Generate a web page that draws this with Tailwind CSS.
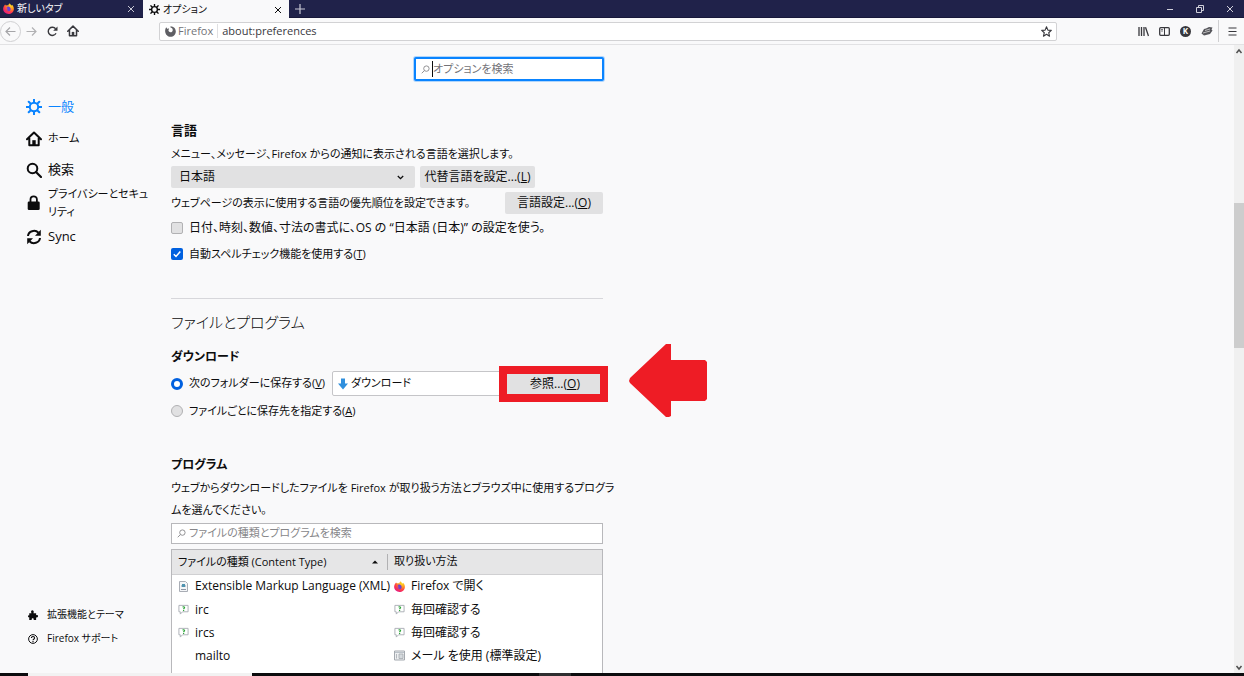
<!DOCTYPE html>
<html lang="ja">
<head>
<meta charset="utf-8">
<title>オプション</title>
<script src="https://cdn.jsdelivr.net/npm/@tailwindcss/browser@4"></script>
</head>
<body class="h-screen flex flex-col overflow-hidden bg-[#f9f9fa] text-[#0c0c0d] text-xs font-['Open_Sans','Noto_Sans_CJK_JP',sans-serif] [font-feature-settings:'palt'] whitespace-nowrap">
<svg class="absolute size-0" aria-hidden="true">
  <defs>
    <radialGradient id="flame" cx="75%" cy="15%" r="95%"><stop offset="0" stop-color="#ffe226"/><stop offset=".4" stop-color="#ff9a1f"/><stop offset=".7" stop-color="#ff3f46"/><stop offset="1" stop-color="#e0158c"/></radialGradient>
  </defs>
  <symbol id="firefox" viewBox="0 0 16 16">
    <path d="M2.200 3.200 3 2l1.400 1.600C5.500 3.200 6.800 3.200 7.600 3.500 7.800 2.200 8.800.900 10 .200c.300 1.600 1.600 2.300 2.500 3.400.500-.200.700-.700.700-1.200C15 4.200 16 6.500 15.800 9c-.300 4-3.600 7-7.800 7S.300 12.800.200 8.800C.200 6.700.900 4.800 2.200 3.200z" fill="url(#flame)"/>
    <path d="M5 6.500C6 5 8.400 4.800 9.900 6c1.700 1.400 1.700 4 .2 5.300-1.600 1.300-4.200 1-5.300-.6 1.200.4 2.500.1 3.200-.7-.8-.3-2-.3-2.700-.9C4.700 8.500 5.600 8 6.700 7.900 6.600 7.200 5.900 6.700 5 6.500z" fill="#6b3fd6"/>
  </symbol>
  <symbol id="gear" viewBox="0 0 16 16">
    <circle cx="8" cy="8" r="4.200" fill="none" stroke="currentColor" stroke-width="2"/>
    <path d="M8 .500V3M8 13v2.500M.500 8H3M13 8h2.500M2.700 2.700l1.800 1.800M11.500 11.500l1.800 1.800M2.700 13.300l1.800-1.800M11.500 4.500l1.800-1.800" stroke="currentColor" stroke-width="2" stroke-linecap="round"/>
  </symbol>
  <symbol id="house" viewBox="0 0 16 16">
    <path d="M1 8.300 8 1.500l7 6.800M3.300 7v7.200h9.400V7" fill="none" stroke="currentColor" stroke-width="2" stroke-linecap="round" stroke-linejoin="round"/>
    <path d="M6.300 14V9.200h3.400V14z" fill="currentColor"/>
  </symbol>
  <symbol id="close" viewBox="0 0 8 8"><path d="M1 1l6 6M7 1 1 7" stroke="currentColor" stroke-width="1"/></symbol>
  <symbol id="lens" viewBox="0 0 10 10"><circle cx="6" cy="4" r="3" fill="none" stroke="currentColor" stroke-width="1"/><path d="M3.800 6.200.800 9.200" stroke="currentColor" stroke-width="1"/></symbol>
  <symbol id="ask" viewBox="0 0 12 12">
    <path d="M1 1.500h10v7H5L2.500 11V8.500H1z" fill="#fff" stroke="#a9adb3" stroke-width="1"/>
    <path d="M5 3.500c.500-.800 2.200-.700 2.200.4 0 .800-1 .8-1 1.700M6.100 6.600v1" fill="none" stroke="#2fa63a" stroke-width="1.300"/>
  </symbol>
</svg>

<header class="shrink-0">
  <div class="flex h-[18px] bg-[#20224a] border-b border-[#17183a] text-[#f9f9fa] text-[10px]">
    <div class="flex items-center w-[143px] pl-[3px] pr-2">
      <svg class="size-[11px] mr-[3px]"><use href="#firefox"/></svg><span class="flex-1">新しいタブ</span>
      <button aria-label="タブを閉じる" class="text-[#c8c8d4]"><svg class="size-[8px]"><use href="#close"/></svg></button>
    </div>
    <div class="flex items-center h-[19px] w-[146px] pl-[6px] pr-[7px] bg-[#f9f9fa] text-[#0c0c0d]">
      <svg class="size-[11px] mr-[3px]"><use href="#gear"/></svg><span class="flex-1">オプション</span>
      <button aria-label="タブを閉じる"><svg class="size-[8px]"><use href="#close"/></svg></button>
    </div>
    <button aria-label="新しいタブを開く" class="pl-[6px] text-[#c8c8d4]"><svg class="size-[10px]" viewBox="0 0 10 10"><path d="M5 0v10M0 5h10" stroke="currentColor" stroke-width="1.200"/></svg></button>
    <div class="ml-auto flex items-center gap-[22px] pr-[10px] text-[#d0d0da]">
      <button aria-label="最小化"><svg class="size-[8px]" viewBox="0 0 8 8"><path d="M1 4.500h6" stroke="currentColor"/></svg></button>
      <button aria-label="元に戻す"><svg class="size-[8px]" viewBox="0 0 8 8"><path d="M.500 2.500h5v5h-5zM2.500 2.500v-2h5v5h-2" fill="none" stroke="currentColor"/></svg></button>
      <button aria-label="閉じる"><svg class="size-[8px]"><use href="#close"/></svg></button>
    </div>
  </div>
  <div class="flex items-center h-[27px] border-b border-[#e2e2e4] text-[#38383d] pr-[7px]">
    <button aria-label="戻る" class="grid place-items-center size-[21px] rounded-full border border-[#d0d0d2] text-[#a5a5a8]"><svg class="size-[11px]" viewBox="0 0 11 11"><path d="M10.500 5.500H1M5 1.500l-4 4 4 4" fill="none" stroke="currentColor" stroke-width="1.200"/></svg></button>
    <button aria-label="進む" class="ml-[5px] text-[#b1b1b3]"><svg class="size-[11px]" viewBox="0 0 11 11"><path d="M.500 5.500H10M6 1.500l4 4-4 4" fill="none" stroke="currentColor" stroke-width="1.200"/></svg></button>
    <button aria-label="再読み込み" class="ml-[10px]"><svg class="size-[11px]" viewBox="0 0 11 11"><path d="M9 7.200A4.100 4.100 0 1 1 8.600 2.800" fill="none" stroke="currentColor" stroke-width="1.400"/><path d="M10.500.500v4.300H6.200z" fill="currentColor"/></svg></button>
    <button aria-label="ホーム" class="ml-[9px]"><svg class="size-[12px]"><use href="#house"/></svg></button>
    <div class="flex items-center flex-1 h-[19px] ml-20 mr-[81px] pl-[5px] pr-1 bg-white border border-[#d2d2d4] rounded-xs">
      <svg class="size-[11px] mr-[2px] text-[#5f5f64]" viewBox="0 0 12 12"><path d="M6 1.500c2 .500 3 2 2.200 4C7.700 7 5.500 7.400 4.300 6 3.500 5 3.700 4 4.400 3.300L3.700 2.500 2.600 3.300 1.400 1.300C.300 2.700 0 4.500.200 6.300.600 9.500 3 11.800 6 11.800c3.300 0 5.800-2.500 5.800-5.800C11.800 2.700 9.400.400 6 .300z" fill="currentColor"/></svg>
      <span class="text-[#737378] text-[11px] pr-[4px] border-r border-[#e0e0e2]">Firefox</span>
      <input aria-label="アドレス" value="about:preferences" class="flex-1 min-w-0 pl-[4px] text-[11px] outline-none">
      <button aria-label="ブックマーク"><svg class="size-[11px]" viewBox="0 0 16 16"><path d="M8 1.200 10 6l5 .4-3.800 3.400 1.200 5L8 12.100l-4.400 2.700 1.200-5L1 6.400 6 6z" fill="none" stroke="currentColor" stroke-width="1.600" stroke-linejoin="round"/></svg></button>
    </div>
    <div class="flex items-center gap-[10px] pr-[5px]">
      <button aria-label="ライブラリ"><svg class="size-[11px]" viewBox="0 0 11 11"><path d="M1 1v9M3.500 1v9M6 1v9M7.500 1.300l3 8.700" stroke="currentColor" stroke-width="1.300"/></svg></button>
      <button aria-label="サイドバー"><svg class="size-[11px]" viewBox="0 0 11 11"><rect x=".700" y="1.700" width="9.600" height="7.600" rx="1" fill="none" stroke="currentColor" stroke-width="1.300"/><path d="M5.500 2v7" stroke="currentColor"/><path d="M2 3.500h2M2 5h2" stroke="currentColor" stroke-width=".7"/></svg></button>
      <button aria-label="アカウント" class="grid place-items-center size-[11px] rounded-full bg-[#38383d] text-white text-[8px] leading-none font-bold">K</button>
      <button aria-label="アドオン"><svg class="size-[12px]" viewBox="0 0 12 12"><path d="M.500 8.500 3 4l2-.5L8 2l3.500.5-1 2 1 1L9 9 3 10.500z" fill="#55555a"/><path d="M2 8l7-2M4 5.500l5-1.500" stroke="#d8d8d8" stroke-width=".8"/></svg></button>
    </div>
    <div class="self-stretch mt-0.5 mb-0.5 border-l border-[#cfcfd1]"></div>
    <button aria-label="メニュー" class="ml-[9px]"><svg class="size-[9px]" viewBox="0 0 9 9"><path d="M.500 1h8M.500 4.500h8M.500 8h8" stroke="currentColor" stroke-width="1.200"/></svg></button>
  </div>
</header>

<div class="flex flex-1 min-h-0">
  <nav class="flex flex-col w-[171px] shrink-0 pt-[46px] pb-[22px] text-[13px]">
    <a href="#general" class="flex items-center gap-[6px] pl-[26px] h-8 text-[#0a84ff]"><svg class="size-4"><use href="#gear"/></svg>一般</a>
    <a href="#home" class="flex items-center gap-[6px] pl-[26px] h-[31px] text-[11px]"><svg class="size-4"><use href="#house"/></svg>ホーム</a>
    <a href="#search" class="flex items-center gap-[6px] pl-[26px] h-[31px]"><svg class="size-4" viewBox="0 0 16 16"><circle cx="6.500" cy="6.500" r="4.800" fill="none" stroke="currentColor" stroke-width="2"/><path d="m10 10 5 5" stroke="currentColor" stroke-width="2.200" stroke-linecap="round"/></svg>検索</a>
    <a href="#privacy" class="flex items-center gap-[6px] pl-[26px] h-9 leading-[18px] text-[11px]"><svg class="size-4" viewBox="0 0 16 16"><path d="M4.500 7V4.500a3.200 3.200 0 0 1 6.400 0V7" fill="none" stroke="currentColor" stroke-width="1.800"/><rect x="1.700" y="6.500" width="12" height="8.500" rx="1.300" fill="currentColor"/></svg><span>プライバシーとセキュ<br>リティ</span></a>
    <a href="#sync" class="flex items-center gap-[6px] pl-[26px] h-8"><svg class="size-4" viewBox="0 0 16 16"><path d="M2 7a6 5.500 0 0 1 10.500-3.200M14 9A6 5.500 0 0 1 3.500 12.200" fill="none" stroke="currentColor" stroke-width="2"/><path d="M14.800.800v6H9zM1.200 15.200v-6H7z" fill="currentColor"/></svg>Sync</a>
    <div class="mt-auto text-[10px]">
      <a href="#addons" class="flex items-center gap-[9px] pl-[28px] h-6"><svg class="size-[10px]" viewBox="0 0 16 16"><path d="M2 5h3.500C4 2 5.500.500 7 .500S10 2 8.800 5H13v3.500c2-1 3 .300 3 1.500s-1 2.500-3 1.500V16H9c.500-2-.300-3-1.500-3S5.500 14 6 16H2v-4.500c-1.500.500-2-.500-2-1.500s.800-1.800 2-1.300z" fill="currentColor"/></svg>拡張機能とテーマ</a>
      <a href="#support" class="flex items-center gap-[9px] pl-[28px] h-6"><svg class="size-[10px]" viewBox="0 0 16 16"><circle cx="8" cy="8" r="7" fill="none" stroke="currentColor" stroke-width="1.600"/><path d="M5.500 6.500c0-3.300 5-3.300 5 0 0 1.800-2.500 1.700-2.500 3.300M8 11v2" fill="none" stroke="currentColor" stroke-width="1.800"/></svg>Firefox サポート</a>
    </div>
  </nav>

  <main class="relative flex-1 min-w-0 overflow-hidden">
    <div class="w-[432px] pt-3">
      <label class="flex items-center ml-auto w-[190px] h-6 -mr-px pl-[5px] bg-white border-2 border-[#0a84ff] rounded-xs ring-1 ring-[#0a84ff]/30">
        <svg class="size-[9px] text-[#87878a]"><use href="#lens"/></svg><span class="w-px h-4 ml-[2px] bg-[#0c0c0d]"></span>
        <input type="search" aria-label="オプションを検索" placeholder="オプションを検索" class="flex-1 min-w-0 text-[11px] outline-none placeholder:text-[#737378]">
      </label>

      <h2 class="mt-[39px] text-[13px] leading-5 font-bold">言語</h2>
      <p class="mt-[3px] text-[11px] leading-[22px]">メニュー、メッセージ、Firefox からの通知に表示される言語を選択します。</p>
      <div class="mt-px flex gap-[5px]">
        <div class="relative w-[244px]">
          <select aria-label="言語" class="appearance-none w-full h-[22px] pl-2 bg-[#e1e1e2] rounded-xs"><option>日本語</option></select>
          <svg class="absolute right-[11px] top-[8px] size-[7px] pointer-events-none" viewBox="0 0 7 7"><path d="m.800 2 2.700 2.700L6.200 2" fill="none" stroke="currentColor" stroke-width="1.300"/></svg>
        </div>
        <button class="w-[115px] h-[22px] bg-[#e1e1e2] rounded-xs">代替言語を設定...(<u>L</u>)</button>
      </div>
      <div class="mt-1 flex items-center justify-between">
        <p class="text-[11px]">ウェブページの表示に使用する言語の優先順位を設定できます。</p>
        <button class="w-[98px] h-[22px] bg-[#e1e1e2] rounded-xs">言語設定...(<u>O</u>)</button>
      </div>
      <label class="mt-1 flex items-center gap-[6px] h-5"><input type="checkbox" class="appearance-none size-3 bg-[#e1e1e2] border border-[#b1b1b3] rounded-xs">日付、時刻、数値、寸法の書式に、OS の “日本語 (日本)” の設定を使う。</label>
      <label class="mt-[6px] flex items-center gap-[6px] h-5 text-[11px]">
        <span class="relative size-3"><input type="checkbox" checked class="block appearance-none size-3 bg-[#0060df] rounded-xs"><svg class="absolute inset-0 size-3 pointer-events-none" viewBox="0 0 12 12"><path d="m2.800 6.200 2.200 2.300 4.300-5" fill="none" stroke="#fff" stroke-width="1.500"/></svg></span>
        <span>自動スペルチェック機能を使用する(<u>T</u>)</span>
      </label>

      <hr class="mt-[34px] border-[#d7d7db]">
      <h1 class="mt-[11px] text-[15px] leading-6 font-light">ファイルとプログラム</h1>

      <h2 class="mt-[13px] text-xs leading-5 font-bold">ダウンロード</h2>
      <div class="mt-1 flex items-center h-[25px]">
        <label class="flex items-center gap-[6px] w-[161px] text-[11px]"><input type="radio" name="save" checked class="appearance-none size-3 shrink-0 rounded-full border-[3px] border-[#0060df] bg-white"><span>次のフォルダーに保存する(<u>V</u>)</span></label>
        <label class="flex items-center gap-[3px] w-[175px] h-[25px] pl-[5px] bg-white border border-[#c5c5c8] rounded-xs">
          <svg class="w-[10px] h-[12px]" viewBox="0 0 10 12"><path d="M3 .500h4v5h3l-5 6-5-6h3z" fill="#2f8fdd"/></svg>
          <input aria-label="保存先フォルダー" value="ダウンロード" class="flex-1 min-w-0 text-[11px] outline-none">
        </label>
        <div class="relative flex-1 pt-px">
          <button class="block w-full h-[22px] bg-[#e1e1e2]">参照...(<u>O</u>)</button>
          <div class="absolute -left-2 -right-[5px] -top-[6px] h-9 border-8 border-[#ee1c25] pointer-events-none"></div>
          <svg class="absolute left-[122px] -top-7 w-[79px] h-[74px]" viewBox="0 0 79 74"><path d="M37 0H42V16H76L78 18V55L76 57H42V72L40 73H37L1 39L0 37L1 34z" fill="#ee1c25"/></svg>
        </div>
      </div>
      <label class="mt-[5px] flex items-center gap-[6px] h-5 text-[11px]"><input type="radio" name="save" class="appearance-none size-3 rounded-full bg-[#e1e1e2] border border-[#b1b1b3]"><span>ファイルごとに保存先を指定する(<u>A</u>)</span></label>

      <h2 class="mt-[34px] text-xs leading-5 font-bold">プログラム</h2>
      <p class="mt-[2px] text-[11px] leading-[22px]">ウェブからダウンロードしたファイルを Firefox が取り扱う方法とブラウズ中に使用するプログラ<br>ムを選んでください。</p>
      <label class="mt-[2px] flex items-center gap-[3px] h-[21px] pl-[5px] bg-white border border-[#b8b8bb]">
        <svg class="size-[9px] text-[#87878a]"><use href="#lens"/></svg>
        <input type="search" aria-label="ファイルの種類とプログラムを検索" placeholder="ファイルの種類とプログラムを検索" class="flex-1 min-w-0 text-[11px] outline-none placeholder:text-[#87878a]">
      </label>
      <div class="mt-[5px] border border-[#b8b8bb] bg-white h-[300px]">
        <table class="w-full table-fixed text-left">
          <thead class="bg-[#e6e6e7]">
            <tr class="h-6 border-b border-[#d0d0d2]">
              <th class="w-[216px] p-0 font-normal text-[11px]"><div class="flex items-center justify-between h-4 pl-[6px] pr-[9px] leading-4 border-r border-[#b1b1b3]">ファイルの種類 (Content Type)<svg class="w-[6px] h-[4px]" viewBox="0 0 6 4"><path d="M3 .500 6 3.500H0z" fill="currentColor"/></svg></div></th>
              <th class="p-0 pl-[6px] font-normal text-[11px]">取り扱い方法</th>
            </tr>
          </thead>
          <tbody>
            <tr class="h-6">
              <td class="p-0"><div class="flex items-center gap-[6px] pl-[6px]"><svg class="size-[11px] shrink-0" viewBox="0 0 11 11"><path d="M1.500.500h6l2 2v8h-8z" fill="#f4f6f8" stroke="#a9adb5"/><path d="M3 5h5M3 8.500h5" stroke="#8d95a3"/><path d="M4 3h3v3H4z" fill="#4d93b0"/></svg>Extensible Markup Language (XML)</div></td>
              <td class="p-0"><div class="flex items-center gap-[6px] pl-[6px]"><svg class="size-[11px]"><use href="#firefox"/></svg>Firefox で開く</div></td>
            </tr>
            <tr class="h-[23px]">
              <td class="p-0"><div class="flex items-center gap-[6px] pl-[6px]"><svg class="size-[11px]"><use href="#ask"/></svg>irc</div></td>
              <td class="p-0"><div class="flex items-center gap-[6px] pl-[6px]"><svg class="size-[11px]"><use href="#ask"/></svg>毎回確認する</div></td>
            </tr>
            <tr class="h-[23px]">
              <td class="p-0"><div class="flex items-center gap-[6px] pl-[6px]"><svg class="size-[11px]"><use href="#ask"/></svg>ircs</div></td>
              <td class="p-0"><div class="flex items-center gap-[6px] pl-[6px]"><svg class="size-[11px]"><use href="#ask"/></svg>毎回確認する</div></td>
            </tr>
            <tr class="h-[23px]">
              <td class="p-0 pl-[23px]">mailto</td>
              <td class="p-0"><div class="flex items-center gap-[6px] pl-[6px]"><svg class="size-[11px]" viewBox="0 0 11 11"><path d="M.500 1h10v9H.500z" fill="#eef0f2" stroke="#a4a9af"/><path d="M1 2.500h9" stroke="#bcc3ca"/><path d="M2.500 4v4.500M5 4h4v4.500H5z" fill="#d5dade" stroke="#a4a9af" stroke-width=".8"/></svg>メール を使用 (標準設定)</div></td>
            </tr>
            <tr class="h-[23px]">
              <td class="p-0"><div class="pl-[6px]"><svg class="size-[11px]" viewBox="0 0 11 11"><path d="M1.500.500h8v10h-8z" fill="#f4f6f8" stroke="#a9adb5"/></svg></div></td>
              <td class="p-0"></td>
            </tr>
          </tbody>
        </table>
      </div>
    </div>
  </main>

  <div class="flex flex-col w-[10px] shrink-0 bg-[#f0f0f0] text-[#505050]">
    <svg class="w-[8px] h-3 mx-auto" viewBox="0 0 8 12"><path d="m1.500 8 2.500-3 2.500 3" fill="none" stroke="currentColor" stroke-width="1.500"/></svg>
    <div class="flex-[146]"></div>
    <div class="flex-[145] bg-[#cdcdcd]"></div>
    <div class="flex-[313]"></div>
    <svg class="w-[8px] h-3 mx-auto" viewBox="0 0 8 12"><path d="m1.500 5 2.500 3 2.500-3" fill="none" stroke="currentColor" stroke-width="1.500"/></svg>
  </div>
</div>
<footer class="flex h-[3px] shrink-0 bg-[#0c0c0e]"><div class="ml-7 w-56 bg-[#f2f2f2]"></div><div class="ml-[287px] w-8 bg-[#2e2e30]"></div></footer>
</body>
</html>
